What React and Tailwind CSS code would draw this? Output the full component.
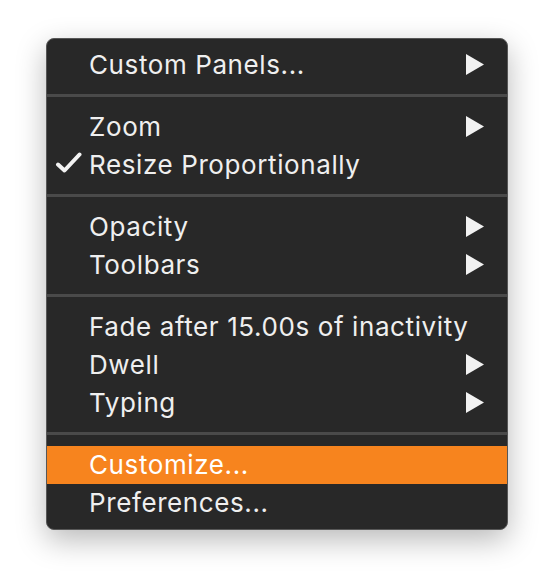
import React from "react";

const sections = [
  [{ label: "Custom Panels...", sub: true }],
  [
    { label: "Zoom", sub: true },
    { label: "Resize Proportionally", checked: true },
  ],
  [
    { label: "Opacity", sub: true },
    { label: "Toolbars", sub: true },
  ],
  [
    { label: "Fade after 15.00s of inactivity" },
    { label: "Dwell", sub: true },
    { label: "Typing", sub: true },
  ],
  [{ label: "Customize...", active: true }, { label: "Preferences..." }],
];

function Check() {
  return (
    <svg width="28" height="24" viewBox="0 0 28 24" className="absolute left-[8px] top-[6px]">
      <path d="M3 12.5 L9.5 18.5 L24.5 2.5" fill="none" stroke="#f2f2f2" strokeWidth="4" strokeLinecap="round" strokeLinejoin="round" />
    </svg>
  );
}

function Arrow() {
  return (
    <svg width="18" height="21" viewBox="0 0 18 21" className="absolute right-[23px] top-[8px]">
      <path d="M0 0 L18 10.5 L0 21 Z" fill="#f2f2f2" />
    </svg>
  );
}

function Row({ item }) {
  return (
    <div
      className={
        "relative flex h-[38px] items-center pl-[42px] " +
        (item.active ? "bg-[#f7841e] text-white" : "text-[#efefef]")
      }
    >
      {item.checked && <Check />}
      <span>{item.label}</span>
      {item.sub && <Arrow />}
    </div>
  );
}

export default function App() {
  return (
    <div className="min-h-[584px] w-[554px] bg-white pl-[46px] pt-[38px]" style={{ fontFamily: "Inter, 'Liberation Sans', sans-serif" }}>
      <div className="w-[462px] overflow-hidden rounded-[8px] border border-[#575757] bg-[#282828] pt-[7px] pb-[7px] text-[26px] font-normal leading-none tracking-[0.6px] shadow-[0_10px_30px_rgba(0,0,0,0.28)]">
        {sections.map((items, i) => (
          <div key={i}>
            {i > 0 && <div className="mt-[10px] mb-[11px] h-[3px] bg-[#4a4a4a]" />}
            {items.map((item) => (
              <Row key={item.label} item={item} />
            ))}
          </div>
        ))}
      </div>
    </div>
  );
}
